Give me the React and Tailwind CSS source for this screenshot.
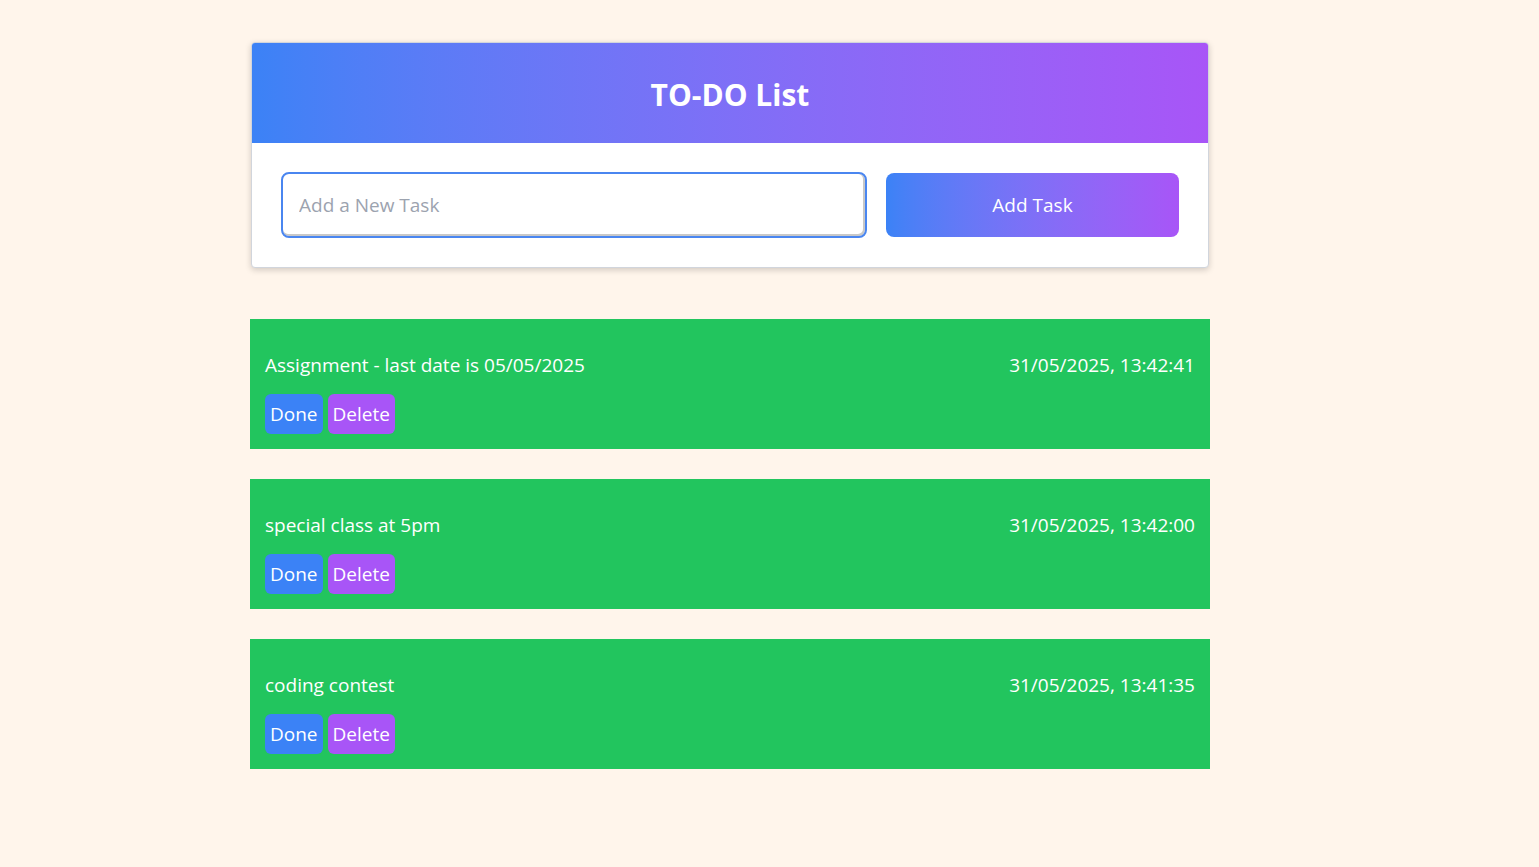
import React from 'react';

const tasks = [
  { text: 'Assignment - last date is 05/05/2025', time: '31/05/2025, 13:42:41' },
  { text: 'special class at 5pm', time: '31/05/2025, 13:42:00' },
  { text: 'coding contest', time: '31/05/2025, 13:41:35' },
];

const font = { fontFamily: '"Segoe UI", "Open Sans", sans-serif' };

const App = () => {
  return (
    <div className="min-h-screen bg-[#fff5eb] pt-[42px]" style={font}>
      <div className="w-[960px] ml-[250px]">
        {/* Input card */}
        <div className="mx-px rounded border border-gray-300 bg-white shadow-[0_2px_6px_rgba(0,0,0,0.18)] overflow-hidden">
          <div className="h-[100px] flex items-center justify-center pt-1 bg-gradient-to-r from-[#3b82f6] to-[#a855f7]">
            <h1 className="text-[30px] leading-[40px] font-bold text-white">TO-DO List</h1>
          </div>
          <div className="grid grid-cols-[2fr_1fr] gap-[19px] items-center px-[29px] py-[29px]">
            <input
              className="w-full h-[66px] rounded-lg border-2 border-[#4a86f0] shadow-[inset_-1px_-1px_0_1px_#c8c8c8] px-[16px] text-[19px] text-gray-700 placeholder:text-[#9ca3af] outline-none bg-white"
              placeholder="Add a New Task"
            />
            <button className="w-full h-16 rounded-lg bg-gradient-to-r from-[#3b82f6] to-[#a855f7] text-white text-[19px]">
              Add Task
            </button>
          </div>
        </div>

        {/* Task list */}
        <div className="mt-[51px] flex flex-col gap-[30px]">
          {tasks.map((t) => (
            <div key={t.time} className="bg-[#22c55e] px-[15px] pt-[30px] pb-[15px] text-white">
              <div className="flex justify-between items-center h-8 text-[19px] leading-8">
                <span>{t.text}</span>
                <span>{t.time}</span>
              </div>
              <div className="flex gap-[5px] mt-[13px]">
                <button className="h-10 px-[5px] rounded-md bg-[#3b82f6] text-[19px] text-white">Done</button>
                <button className="h-10 px-[5px] rounded-md bg-[#a855f7] text-[19px] text-white">Delete</button>
              </div>
            </div>
          ))}
        </div>
      </div>
    </div>
  );
};

export default App;
